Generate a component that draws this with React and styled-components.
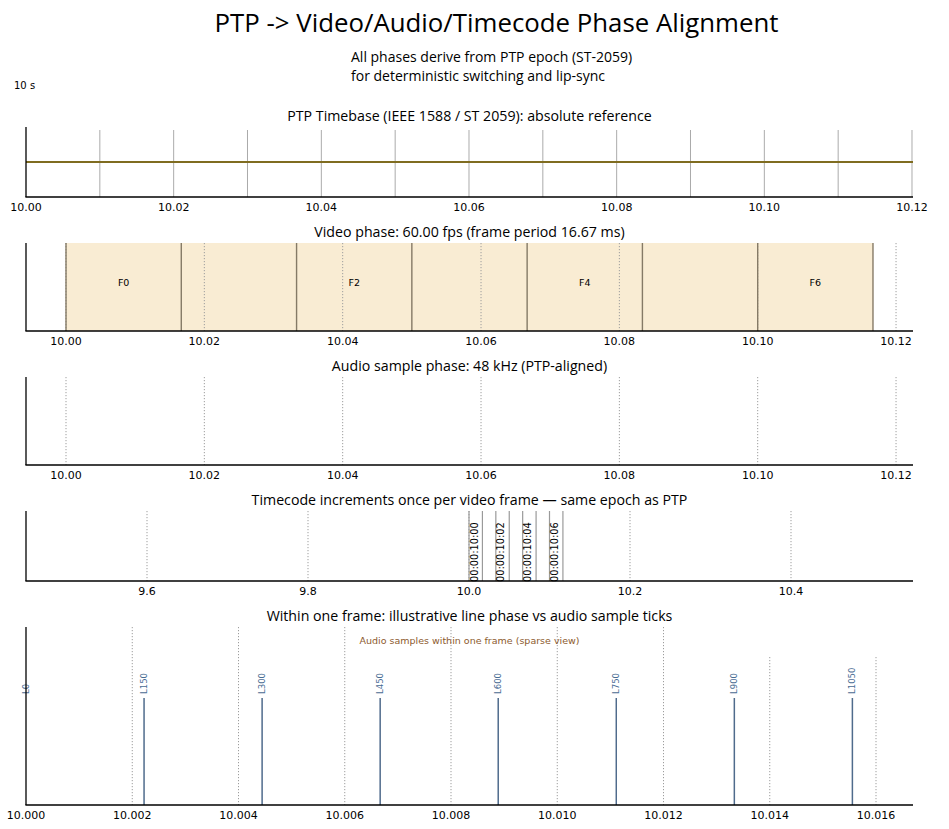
import React from 'react';
import styled, { createGlobalStyle } from 'styled-components';

const Global = createGlobalStyle`
  html, body { margin: 0; padding: 0; background: #fff; }
  body { font-family: "DejaVu Sans", sans-serif; color: #000; }
`;

const Page = styled.div`
  width: 949px;
  height: 829px;
  display: flex;
  flex-direction: column;
  background: #fff;
  overflow: hidden;
`;

const Title = styled.h1`
  margin: 0;
  padding: 8px 0 0 44px;
  text-align: center;
  font-family: "Open Sans", "Liberation Sans", sans-serif;
  font-weight: 400;
  font-size: 25.8px;
  line-height: 28px;
  color: #000;
`;

const HeaderRow = styled.div`
  display: flex;
  align-items: flex-end;
  padding-left: 14px;
  margin-top: 11px;
`;

const SideLabel = styled.span`
  width: 337px;
  margin-bottom: -1px;
  font-family: "DejaVu Sans", sans-serif;
  font-size: 10px;
  line-height: 14px;
`;

const Subtitle = styled.div`
  padding-bottom: 7px;
  font-family: "Open Sans", "Liberation Sans", sans-serif;
  font-size: 14px;
  line-height: 19px;
`;

const Panels = styled.div`
  display: flex;
  flex-direction: column;
  gap: 8px;
  margin-top: 15px;
`;

const Panel = styled.section`
  display: flex;
  flex-direction: column;
`;

const PanelTitle = styled.h2`
  width: 939px;
  height: 18px;
  margin: 0 0 2px;
  text-align: center;
  font-family: "Open Sans", "Liberation Sans", sans-serif;
  font-weight: 400;
  font-size: 14.2px;
  line-height: 18px;
  white-space: nowrap;
  color: #000;
`;

const ChartSvg = styled.svg`
  display: block;
  overflow: visible;
  font-family: "DejaVu Sans", sans-serif;
`;

const range = (a, b) => {
  const r = [];
  for (let i = a; i <= b; i++) r.push(i);
  return r;
};

function Axes({ axH, X, ticks, fmt, children }) {
  return (
    <ChartSvg width={949} height={axH + 18} viewBox={`0 0 949 ${axH + 18}`}>
      {children}
      <line x1={26} y1={0} x2={26} y2={axH} stroke="#000" strokeWidth={1.3} />
      <line x1={25.4} y1={axH} x2={913} y2={axH} stroke="#000" strokeWidth={1.6} />
      {ticks.map((t, i) => (
        <text key={i} x={X(t)} y={axH + 14} textAnchor="middle" fontSize={11} fill="#000">
          {fmt(t)}
        </text>
      ))}
    </ChartSvg>
  );
}

const Dotted = ({ x, y1, y2 }) => (
  <line x1={x} y1={y1} x2={x} y2={y2} stroke="#9d9d9d" strokeWidth={1} strokeDasharray="1.2 1.8" />
);

function PtpChart() {
  const axH = 70;
  const X = (t) => 26 + (t - 10) * 7383.3;
  return (
    <Axes axH={axH} X={X} ticks={range(0, 6).map((i) => 10 + i * 0.02)} fmt={(t) => t.toFixed(2)}>
      {range(1, 12).map((i) => (
        <line key={i} x1={X(10 + i * 0.01)} y1={3} x2={X(10 + i * 0.01)} y2={axH} stroke="#ababab" strokeWidth={1} />
      ))}
      <line x1={26} y1={35} x2={913} y2={35} stroke="#7f6c20" strokeWidth={2} />
    </Axes>
  );
}

const videoX = (t) => 66 + (t - 10) * 6917;
const videoTicks = range(0, 6).map((i) => 10 + i * 0.02);

function VideoChart() {
  const axH = 88;
  const X = videoX;
  return (
    <Axes axH={axH} X={X} ticks={videoTicks} fmt={(t) => t.toFixed(2)}>
      <rect x={X(10)} y={0} width={X(10 + 7 / 60) - X(10)} height={axH} fill="#f9ecd3" />
      {videoTicks.map((t, i) => (
        <Dotted key={i} x={X(t)} y1={0} y2={axH} />
      ))}
      {range(0, 7).map((k) => (
        <line key={k} x1={X(10 + k / 60)} y1={0} x2={X(10 + k / 60)} y2={axH} stroke="#857a66" strokeWidth={1.4} />
      ))}
      {[0, 2, 4, 6].map((k) => (
        <text key={k} x={X(10 + (k + 0.5) / 60)} y={43} textAnchor="middle" fontSize={9.5} fill="#000">
          F{k}
        </text>
      ))}
    </Axes>
  );
}

function AudioChart() {
  const axH = 88;
  const X = videoX;
  return (
    <Axes axH={axH} X={X} ticks={videoTicks} fmt={(t) => t.toFixed(2)}>
      {videoTicks.map((t, i) => (
        <Dotted key={i} x={X(t)} y1={0} y2={axH} />
      ))}
    </Axes>
  );
}

function TimecodeChart() {
  const axH = 70;
  const X = (t) => 469 + (t - 10) * 805;
  const ticks = range(-2, 2).map((i) => 10 + i * 0.2);
  return (
    <Axes axH={axH} X={X} ticks={ticks} fmt={(t) => t.toFixed(1)}>
      {ticks.map((t, i) => (
        <Dotted key={i} x={X(t)} y1={0} y2={axH} />
      ))}
      {range(0, 7).map((k) => (
        <line key={k} x1={X(10 + k / 60)} y1={0} x2={X(10 + k / 60)} y2={axH} stroke="#9a9a9a" strokeWidth={1.2} />
      ))}
      {[0, 2, 4, 6].map((k) => (
        <text
          key={k}
          transform={`translate(${X(10 + k / 60) + 8.6}, ${axH + 1}) rotate(-90)`}
          fontSize={9.8}
          fill="#000"
        >
          {`00:00:10:0${k}`}
        </text>
      ))}
    </Axes>
  );
}

function LineChart() {
  const axH = 178;
  const X = (t) => 26 + (t - 10) * 53125;
  const ticks = range(0, 8).map((i) => 10 + i * 0.002);
  const lineT = (k) => 10 + (k * 150) / 1125 / 60;
  return (
    <Axes axH={axH} X={X} ticks={ticks} fmt={(t) => t.toFixed(3)}>
      {range(1, 8).map((i) => (
        <Dotted key={i} x={X(10 + i * 0.002)} y1={i >= 7 ? 30 : 0} y2={axH} />
      ))}
      <text x={469.5} y={16.5} textAnchor="middle" fontSize={9.5} fill="#8c5a2e">
        Audio samples within one frame (sparse view)
      </text>
      {range(1, 7).map((k) => (
        <line key={k} x1={X(lineT(k))} y1={71} x2={X(lineT(k))} y2={axH} stroke="#4f6b8c" strokeWidth={1.5} />
      ))}
      {range(0, 7).map((k) => (
        <text
          key={k}
          transform={`translate(${X(lineT(k)) + 3}, 67) rotate(-90)`}
          fontSize={8.5}
          fill="#4a6c94"
        >
          {`L${k * 150}`}
        </text>
      ))}
    </Axes>
  );
}

export default function App() {
  return (
    <Page>
      <Global />
      <Title>PTP -&gt; Video/Audio/Timecode Phase Alignment</Title>
      <HeaderRow>
        <SideLabel>10 s</SideLabel>
        <Subtitle>
          All phases derive from PTP epoch (ST-2059)
          <br />
          for deterministic switching and lip-sync
        </Subtitle>
      </HeaderRow>
      <Panels>
        <Panel>
          <PanelTitle>PTP Timebase (IEEE 1588 / ST 2059): absolute reference</PanelTitle>
          <PtpChart />
        </Panel>
        <Panel>
          <PanelTitle>Video phase: 60.00 fps (frame period 16.67 ms)</PanelTitle>
          <VideoChart />
        </Panel>
        <Panel>
          <PanelTitle>Audio sample phase: 48 kHz (PTP-aligned)</PanelTitle>
          <AudioChart />
        </Panel>
        <Panel>
          <PanelTitle>Timecode increments once per video frame — same epoch as PTP</PanelTitle>
          <TimecodeChart />
        </Panel>
        <Panel>
          <PanelTitle>Within one frame: illustrative line phase vs audio sample ticks</PanelTitle>
          <LineChart />
        </Panel>
      </Panels>
    </Page>
  );
}
